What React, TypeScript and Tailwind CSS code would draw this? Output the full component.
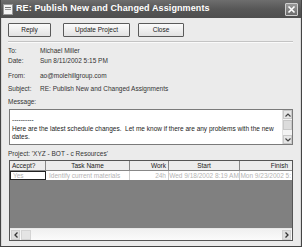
import React from "react";

const font = { fontFamily: '"Liberation Sans", Arial, sans-serif' };

function Btn({ label, w }: { label: string; w: string }) {
  return (
    <div
      className={`${w} h-[14px] flex items-center justify-center border border-[#5a5a5a] bg-gradient-to-b from-[#fbfbfb] to-[#e2e2e2] text-[6.5px] text-[#222] rounded-[1px]`}
    >
      {label}
    </div>
  );
}

function Row({ label, value, h, mt }: { label: string; value: string; h: string; mt: string }) {
  return (
    <div className={`flex items-center ${h} ${mt} text-[6.5px] text-[#333]`}>
      <div className="w-[32px]">{label}</div>
      <div>{value}</div>
    </div>
  );
}

export default function App() {
  return (
    <div className="w-[302px] h-[247px] bg-[#3a3a3a] p-0 overflow-hidden" style={font}>
      <div className="w-[302px] h-[247px] flex flex-col border-x border-b border-[#444]">
        {/* Title bar */}
        <div className="h-[18px] flex items-center bg-gradient-to-b from-[#6e6e6e] via-[#575757] to-[#4e4e4e] shrink-0">
          <div className="ml-[2px] w-[10px] h-[11px] bg-[#f4f4f4] border border-[#999] flex flex-col pt-[2px] px-[1px] gap-[1px]">
            <div className="h-[1px] bg-[#777]" />
            <div className="h-[1px] bg-[#999]" />
          </div>
          <div className="ml-[3px] text-[9px] font-bold text-white tracking-[0.1px]">
            RE: Publish New and Changed Assignments
          </div>
          <div className="ml-auto mr-[3px] w-[13px] h-[13px] border border-[#cfcfcf] bg-gradient-to-b from-[#9a9a9a] to-[#6c6c6c] flex items-center justify-center rounded-[1px]">
            <svg width="9" height="9" viewBox="0 0 9 9">
              <path d="M1.5 1.5 L7.5 7.5 M7.5 1.5 L1.5 7.5" stroke="#fff" strokeWidth="1.6" />
            </svg>
          </div>
        </div>
        {/* Body */}
        <div className="flex-1 bg-[#ebebeb] border-x border-[#d8d8d8] flex flex-col px-[6px] min-h-0">
          <div className="flex gap-[12px] mt-[5px]">
            <div className="flex gap-[12px]">
              <Btn label="Reply" w="w-[43px]" />
              <Btn label="Update Project" w="w-[67px]" />
            </div>
            <div className="-ml-[4px]">
              <Btn label="Close" w="w-[46px]" />
            </div>
          </div>
          <div className="mt-[4px] mr-[1px] h-[2px] border-t border-[#c4c4c4] border-b border-b-[#fafafa]" />
          <Row label="To:" value="Michael Miller" h="h-[10px]" mt="mt-[3px]" />
          <Row label="Date:" value="Sun 8/11/2002 5:15 PM" h="h-[10px]" mt="mt-0" />
          <Row label="From:" value="ao@molehillgroup.com" h="h-[10px]" mt="mt-[5px]" />
          <Row label="Subject:" value="RE: Publish New and Changed Assignments" h="h-[10px]" mt="mt-[3px]" />
          <div className="h-[10px] mt-[3px] flex items-center text-[6.5px] text-[#333]">Message:</div>
          {/* Message box */}
          <div className="mt-[2px] h-[36px] mx-[1px] border border-[#7a7a7a] bg-white flex">
            <div className="flex-1 pl-[2px] pt-[6px] text-[6.5px] leading-[8.5px] text-[#222]">
              <div>----------</div>
              <div>
                Here are the latest schedule changes.&nbsp; Let me know if there are any problems with the new
              </div>
              <div>dates.</div>
            </div>
            <div className="w-[10px] flex flex-col bg-[#f3f3f3] border-l border-[#e0e0e0]">
              <div className="h-[9px] flex items-center justify-center border border-[#c8c8c8] bg-[#e6e6e6]">
                <svg width="6" height="4" viewBox="0 0 6 4">
                  <path d="M0.5 3.5 L3 1 L5.5 3.5" stroke="#444" strokeWidth="1.2" fill="none" />
                </svg>
              </div>
              <div className="h-[10px] mt-[1px] border border-[#c8c8c8] bg-[#dcdcdc]" />
              <div className="flex-1" />
              <div className="h-[9px] flex items-center justify-center border border-[#c8c8c8] bg-[#e6e6e6]">
                <svg width="6" height="4" viewBox="0 0 6 4">
                  <path d="M0.5 0.5 L3 3 L5.5 0.5" stroke="#444" strokeWidth="1.2" fill="none" />
                </svg>
              </div>
            </div>
          </div>
          <div className="h-[10px] mt-[4px] flex items-center text-[6.5px] text-[#333]">
            Project: 'XYZ - BOT - c Resources'
          </div>
          {/* Table */}
          <div className="mt-[1px] mx-[1px] h-[81px] border border-[#555] flex flex-col bg-[#808080]">
            <div className="flex h-[10px] bg-[#ececec] text-[6.5px] text-[#222] border-b border-[#888]">
              <div className="w-[36px] pl-[2px] flex items-center border-r border-[#888]">Accept?</div>
              <div className="w-[84px] flex items-center justify-center border-r border-[#888]">Task Name</div>
              <div className="w-[39px] flex items-center justify-end pr-[2px] border-r border-[#888]">Work</div>
              <div className="w-[71px] flex items-center justify-center border-r border-[#888]">Start</div>
              <div className="flex-1 flex items-center justify-end pr-[4px]">Finish</div>
            </div>
            <div className="flex h-[9px] bg-white text-[6.5px] text-[#b4b4b4] whitespace-nowrap overflow-hidden">
              <div className="w-[36px] pl-[2px] flex items-center border border-[#222]">Yes</div>
              <div className="w-[84px] pl-[3px] flex items-center border-r border-[#ccc]">Identify current materials</div>
              <div className="w-[39px] flex items-center justify-end pr-[2px] border-r border-[#ccc]">24h</div>
              <div className="w-[71px] flex items-center justify-center border-r border-[#ccc]">Wed 9/18/2002 8:19 AM</div>
              <div className="flex-1 flex items-center justify-end pr-[1px]">Mon 9/23/2002 5:</div>
            </div>
            <div className="flex-1" />
            <div className="h-[12px] bg-gradient-to-b from-[#f0f0f0] to-[#fbfbfb] flex items-center px-[1px] border-t border-[#e8e8e8]">
              <div className="w-[9px] h-[10px] flex items-center justify-center bg-[#dedede] border border-[#cfcfcf]">
                <svg width="4" height="6" viewBox="0 0 4 6">
                  <path d="M3.5 0.5 L1 3 L3.5 5.5" stroke="#333" strokeWidth="1.3" fill="none" />
                </svg>
              </div>
              <div className="w-[10px] h-[10px] ml-[1px] bg-[#e4e4e4] border border-[#d4d4d4]" />
              <div className="flex-1" />
              <div className="w-[9px] h-[10px] flex items-center justify-center bg-[#dedede] border border-[#cfcfcf]">
                <svg width="4" height="6" viewBox="0 0 4 6">
                  <path d="M0.5 0.5 L3 3 L0.5 5.5" stroke="#333" strokeWidth="1.3" fill="none" />
                </svg>
              </div>
            </div>
          </div>
          <div className="flex-1" />
        </div>
      </div>
    </div>
  );
}
